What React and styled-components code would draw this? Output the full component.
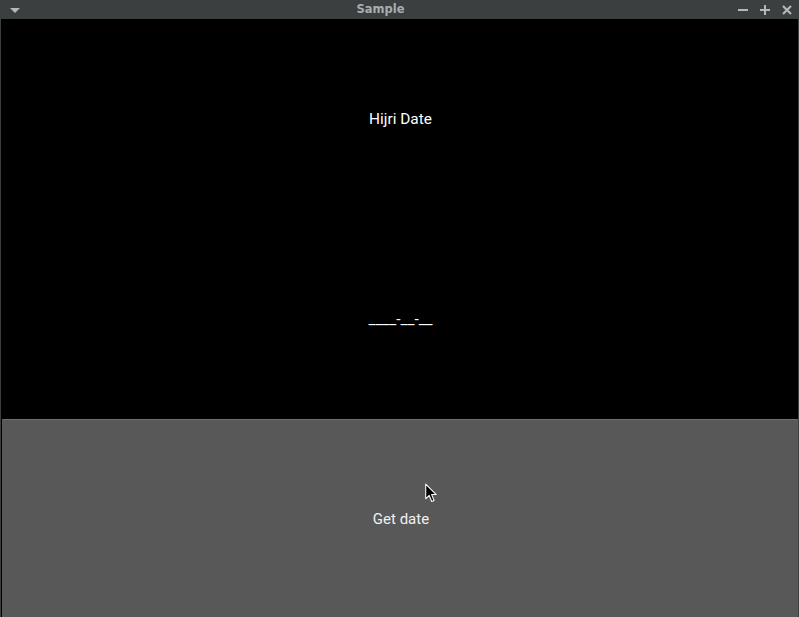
import React from 'react';
import styled, { createGlobalStyle } from 'styled-components';

const GlobalStyle = createGlobalStyle`
  html, body {
    margin: 0;
    padding: 0;
    background: #000;
    overflow: hidden;
  }
`;

const Window = styled.div`
  position: relative;
  width: 799px;
  height: 617px;
  display: flex;
  flex-direction: column;
  overflow: hidden;
  background: #3b3f40;
`;

const TitleBar = styled.div`
  height: 19px;
  flex: none;
  display: flex;
  align-items: center;
  justify-content: space-between;
  padding: 0 7px 0 10px;
  background: #3b3f40;
`;

const Title = styled.div`
  flex: 1;
  text-align: center;
  font-family: "DejaVu Sans", sans-serif;
  font-weight: bold;
  font-size: 11.5px;
  color: #a6aeb2;
  padding-left: 3px;
  line-height: 19px;
`;

const Controls = styled.div`
  display: flex;
  align-items: center;
  gap: 12px;
`;

const Body = styled.div`
  display: flex;
  flex-direction: column;
  margin: 0 1px;
  background: #000;
  flex: none;
  height: 600px;
`;

const Row = styled.div`
  height: 200px;
  flex: none;
  display: flex;
  align-items: center;
  justify-content: center;
  padding-left: 2px;
  font-family: Roboto, sans-serif;
  font-size: 15.4px;
  color: #fff;
`;

const Button = styled(Row)`
  margin-left: 1px;
  background: #585858;
  box-shadow: inset 0 1px 0 #6e6e6e;
  color: #f0f0f0;
  font-size: 15px;
`;

const Cursor = styled.svg`
  position: absolute;
  left: 424px;
  top: 483px;
`;

const icon = { fill: 'none', stroke: '#b4b9b6', strokeWidth: 2 };

export default function App() {
  return (
    <>
      <GlobalStyle />
      <Window>
        <TitleBar>
          <svg width="10" height="6" viewBox="0 0 10 6">
            <path d="M0 1 L10 1 L5 6 Z" fill="#b4b9b6" />
          </svg>
          <Title>Sample</Title>
          <Controls>
            <svg width="10" height="10" viewBox="0 0 10 10">
              <path d="M0 5 H10" {...icon} />
            </svg>
            <svg width="10" height="10" viewBox="0 0 10 10">
              <path d="M0 5 H10 M5 0 V10" {...icon} />
            </svg>
            <svg width="10" height="10" viewBox="0 0 10 10">
              <path d="M1 1 L9 9 M9 1 L1 9" {...icon} strokeWidth="2.2" />
            </svg>
          </Controls>
        </TitleBar>
        <Body>
          <Row>Hijri Date</Row>
          <Row>____-__-__</Row>
          <Button>Get date</Button>
        </Body>
        <Cursor width="14" height="20" viewBox="0 0 12 19">
          <path d="M1 1 L1 15 L4.3 11.8 L6.7 17.5 L8.9 16.6 L6.6 11 L11 11 Z" fill="#000" stroke="#fff" strokeWidth="1" strokeLinejoin="round" />
        </Cursor>
      </Window>
    </>
  );
}
